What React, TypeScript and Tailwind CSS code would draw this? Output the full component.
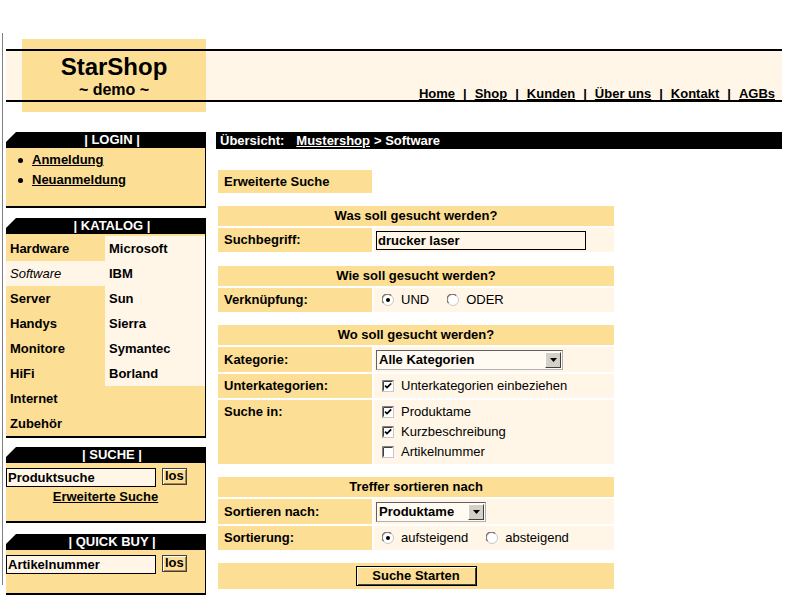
import React from 'react';

const YELLOW = 'bg-[#fcdf94]';
const CREAM = 'bg-[#fff6e8]';

function Radio({ checked }: { checked?: boolean }) {
  return (
    <svg width="12" height="12" viewBox="0 0 12 12" className="shrink-0">
      <circle cx="6" cy="6" r="5.5" fill="#ffffff" stroke="#c8c8c8" />
      <path d="M1.6 9.2 A4.6 4.6 0 0 1 9.2 1.6" fill="none" stroke="#707070" strokeWidth="1.2" />
      {checked && <circle cx="6" cy="6" r="2" fill="#000" />}
    </svg>
  );
}

function Checkbox({ checked }: { checked?: boolean }) {
  return (
    <svg width="12" height="12" viewBox="0 0 12 12" className="shrink-0">
      <rect x="0.5" y="0.5" width="11" height="11" fill="#ffffff" stroke="#c8c8c8" />
      <path d="M0.5 11.5 V0.5 H11.5" fill="none" stroke="#808080" />
      <path d="M1.5 10.5 V1.5 H10.5" fill="none" stroke="#404040" />
      {checked && <path d="M3 5.6 L5 7.6 L9.2 3.4" fill="none" stroke="#000" strokeWidth="1.7" />}
    </svg>
  );
}

function Select({ value, width }: { value: string; width: string }) {
  return (
    <div className={`${width} h-[20px] flex items-center border border-t-[#606060] border-l-[#606060] border-b-[#b0b0b0] border-r-[#b0b0b0] bg-[#fffaf2] pl-[2px] pr-[1px]`}>
      <span className="flex-1 font-bold leading-[16px]">{value}</span>
      <div className="w-[16px] h-[16px] bg-[#d4d0c8] border border-t-white border-l-white border-b-[#404040] border-r-[#404040] flex items-center justify-center">
        <svg width="7" height="4" viewBox="0 0 7 4">
          <path d="M0 0 H7 L3.5 4 Z" fill="#000" />
        </svg>
      </div>
    </div>
  );
}

function SideBox({ title, bodyClass, children }: { title: string; bodyClass: string; children?: React.ReactNode }) {
  return (
    <div>
      <div className="h-[16px] bg-black text-white font-bold text-center leading-[16px] pl-[12px] [clip-path:polygon(10px_0,100%_0,100%_100%,0_100%,0_10px)]">
        | {title} |
      </div>
      <div className={`${YELLOW} border-r border-b-2 border-black ${bodyClass}`}>{children}</div>
    </div>
  );
}

function SmallButton({ label }: { label: string }) {
  return (
    <div className={`${YELLOW} h-[17px] px-[2px] ml-[6px] border border-[#404040] shadow-[inset_1px_1px_0_#fff,inset_-1px_-1px_0_#a08850] font-bold leading-[14px] text-center`}>
      {label}
    </div>
  );
}

function Header() {
  const links = ['Home', 'Shop', 'Kunden', 'Über uns', 'Kontakt', 'AGBs'];
  return (
    <div>
      <div className="h-[10px]">
        <div className={`ml-[16px] w-[184px] h-full ${YELLOW}`} />
      </div>
      <div className="h-[2px] bg-black" />
      <div className={`h-[49px] ${CREAM} flex`}>
        <div className={`ml-[16px] w-[184px] ${YELLOW} flex flex-col items-center`}>
          <div className="mt-[4px] text-[24px] leading-[24px] font-bold">StarShop</div>
          <div className="mt-[3px] text-[16px] leading-[16px] font-bold">~ demo ~</div>
        </div>
        <div className="ml-auto self-end pr-[7px] flex font-bold leading-[13px]">
          {links.map((l, i) => (
            <span key={l} className="flex">
              {i > 0 && <span className="mx-[8px]">|</span>}
              <a className="underline underline-offset-[1px]">{l}</a>
            </span>
          ))}
        </div>
      </div>
      <div className="h-[2px] bg-black" />
      <div className="h-[10px]">
        <div className={`ml-[16px] w-[184px] h-full ${YELLOW}`} />
      </div>
    </div>
  );
}

function Sidebar() {
  const katalog: [string, boolean, boolean][] = [
    ['Hardware', false, false],
    ['Microsoft', true, false],
    ['Software', true, true],
    ['IBM', true, false],
    ['Server', false, false],
    ['Sun', true, false],
    ['Handys', false, false],
    ['Sierra', true, false],
    ['Monitore', false, false],
    ['Symantec', true, false],
    ['HiFi', false, false],
    ['Borland', true, false],
    ['Internet', false, false],
    ['', false, false],
    ['Zubehör', false, false],
    ['', false, false],
  ];
  return (
    <div className="w-[200px] shrink-0 flex flex-col">
      <SideBox title="LOGIN" bodyClass="h-[60px] pt-[2px]">
        {['Anmeldung', 'Neuanmeldung'].map((t) => (
          <div key={t} className="flex items-center h-[20px] font-bold">
            <div className="ml-[12px] mr-[9px] w-[5px] h-[5px] rounded-full bg-black" />
            <a className="underline">{t}</a>
          </div>
        ))}
      </SideBox>
      <div className="mt-[10px]">
        <SideBox title="KATALOG" bodyClass="pt-[2px]">
          <div className="grid grid-cols-[99px_1fr]">
            {katalog.map(([t, cream, italic], i) => (
              <div
                key={i}
                className={`h-[25px] leading-[26px] pl-[4px] ${cream ? CREAM : ''} ${italic ? 'italic' : 'font-bold'}`}
              >
                {t}
              </div>
            ))}
          </div>
        </SideBox>
      </div>
      <div className="mt-[9px]">
        <SideBox title="SUCHE" bodyClass="h-[60px] pt-[5px]">
          <div className="flex items-start">
            <div className={`w-[150px] h-[19px] border border-black ${CREAM} font-bold leading-[17px] pl-[1px]`}>Produktsuche</div>
            <SmallButton label="los" />
          </div>
          <div className="mt-[1px] text-center leading-[18px] font-bold">
            <a className="underline">Erweiterte Suche</a>
          </div>
        </SideBox>
      </div>
      <div className="mt-[11px]">
        <SideBox title="QUICK BUY" bodyClass="h-[45px] pt-[5px]">
          <div className="flex items-start">
            <div className={`w-[150px] h-[19px] border border-black ${CREAM} font-bold leading-[17px] pl-[1px]`}>Artikelnummer</div>
            <SmallButton label="los" />
          </div>
        </SideBox>
      </div>
    </div>
  );
}

function SectionHead({ title }: { title: string }) {
  return <div className={`h-[20px] ${YELLOW} text-center font-bold leading-[20px]`}>{title}</div>;
}

function Row({ label, h, top, children }: { label: string; h: string; top?: boolean; children: React.ReactNode }) {
  return (
    <div className={`flex gap-[2px] ${h}`}>
      <div className={`w-[154px] ${YELLOW} pl-[6px] font-bold flex ${top ? 'items-start pt-[2px] leading-[20px]' : 'items-center'}`}>
        {label}
      </div>
      <div className={`flex-1 ${CREAM} pl-[2px] flex ${top ? 'flex-col pt-[2px]' : 'items-center'}`}>{children}</div>
    </div>
  );
}

function Option({ kind, checked, label, className = '' }: { kind: 'radio' | 'check'; checked?: boolean; label: string; className?: string }) {
  return (
    <div className={`flex items-center h-[20px] ml-[6px] ${className}`}>
      {kind === 'radio' ? <Radio checked={checked} /> : <Checkbox checked={checked} />}
      <span className="ml-[7px]">{label}</span>
    </div>
  );
}

function Main() {
  return (
    <div className="flex-1">
      <div className="h-[17px] bg-black text-white font-bold leading-[17px] pl-[4px] flex">
        <span>Übersicht:</span>
        <a className="ml-[12px] underline">Mustershop</a>
        <span className="ml-[4px]">&gt; Software</span>
      </div>
      <div className="ml-[2px] w-[396px]">
        <div className={`mt-[21px] w-[154px] h-[23px] ${YELLOW} pl-[6px] font-bold leading-[23px]`}>Erweiterte Suche</div>

        <div className="mt-[13px] flex flex-col gap-[2px]">
          <SectionHead title="Was soll gesucht werden?" />
          <Row label="Suchbegriff:" h="h-[24px]">
            <div className={`w-[210px] h-[19px] border border-black ${CREAM} font-bold leading-[17px] pl-[1px]`}>drucker laser</div>
          </Row>
        </div>

        <div className="mt-[14px] flex flex-col gap-[2px]">
          <SectionHead title="Wie soll gesucht werden?" />
          <Row label="Verknüpfung:" h="h-[24px]">
            <Option kind="radio" checked label="UND" />
            <Option kind="radio" label="ODER" className="ml-[18px]" />
          </Row>
        </div>

        <div className="mt-[13px] flex flex-col gap-[2px]">
          <SectionHead title="Wo soll gesucht werden?" />
          <Row label="Kategorie:" h="h-[25px]">
            <Select value="Alle Kategorien" width="w-[187px]" />
          </Row>
          <Row label="Unterkategorien:" h="h-[24px]">
            <Option kind="check" checked label="Unterkategorien einbeziehen" />
          </Row>
          <Row label="Suche in:" h="h-[64px]" top>
            <Option kind="check" checked label="Produktame" />
            <Option kind="check" checked label="Kurzbeschreibung" />
            <Option kind="check" label="Artikelnummer" />
          </Row>
        </div>

        <div className="mt-[13px] flex flex-col gap-[2px]">
          <SectionHead title="Treffer sortieren nach" />
          <Row label="Sortieren nach:" h="h-[25px]">
            <Select value="Produktame" width="w-[110px]" />
          </Row>
          <Row label="Sortierung:" h="h-[24px]">
            <Option kind="radio" checked label="aufsteigend" />
            <Option kind="radio" label="absteigend" className="ml-[18px]" />
          </Row>
        </div>

        <div className={`mt-[13px] h-[26px] ${YELLOW} flex items-center justify-center`}>
          <div className={`w-[121px] h-[20px] ${YELLOW} border border-black shadow-[inset_1px_1px_0_#fff8e0,inset_-1px_-1px_0_#404040] text-center font-bold leading-[18px]`}>
            Suche Starten
          </div>
        </div>
      </div>
    </div>
  );
}

export default function App() {
  return (
    <div className="w-[795px] min-h-[601px] bg-white text-black text-[13px] font-['Liberation_Sans',Arial,sans-serif] pt-[33px] flex items-start">
      <div className="ml-[2px] w-px h-[552px] bg-[#808080] shrink-0" />
      <div className="ml-[3px] w-[776px] pt-[6px]">
        <Header />
        <div className="mt-[20px] flex gap-[10px]">
          <Sidebar />
          <Main />
        </div>
      </div>
    </div>
  );
}
